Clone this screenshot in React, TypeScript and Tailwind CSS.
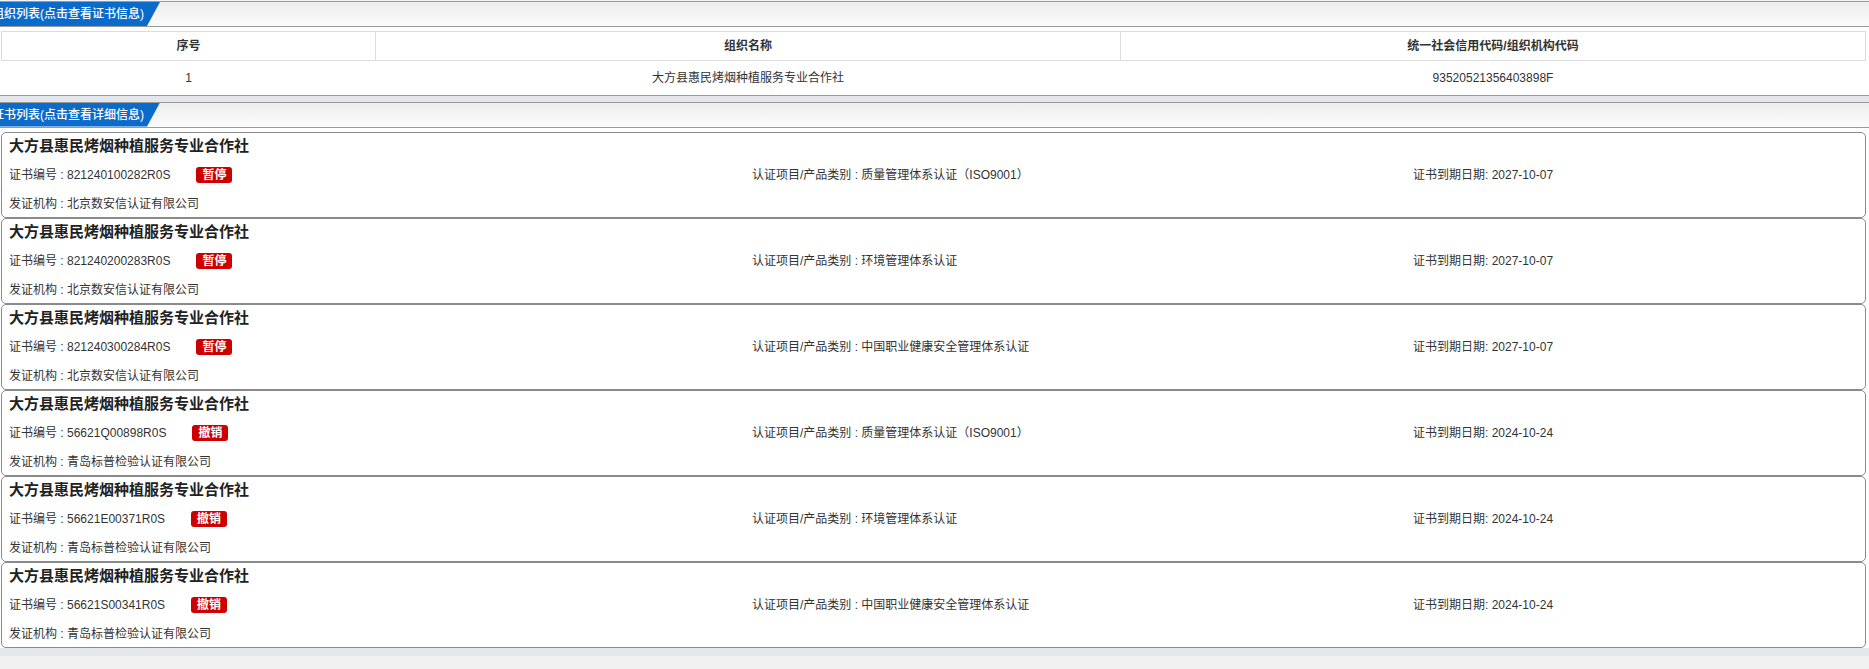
const FONT = "font-['Liberation_Sans','Noto_Sans_CJK_SC',sans-serif]";

type Cert = {
  no: string;
  status: "暂停" | "撤销";
  item: string;
  expire: string;
  issuer: string;
};

const orgName = "大方县惠民烤烟种植服务专业合作社";

const certs: Cert[] = [
  { no: "821240100282R0S", status: "暂停", item: "质量管理体系认证（ISO9001）", expire: "2027-10-07", issuer: "北京数安信认证有限公司" },
  { no: "821240200283R0S", status: "暂停", item: "环境管理体系认证", expire: "2027-10-07", issuer: "北京数安信认证有限公司" },
  { no: "821240300284R0S", status: "暂停", item: "中国职业健康安全管理体系认证", expire: "2027-10-07", issuer: "北京数安信认证有限公司" },
  { no: "56621Q00898R0S", status: "撤销", item: "质量管理体系认证（ISO9001）", expire: "2024-10-24", issuer: "青岛标普检验认证有限公司" },
  { no: "56621E00371R0S", status: "撤销", item: "环境管理体系认证", expire: "2024-10-24", issuer: "青岛标普检验认证有限公司" },
  { no: "56621S00341R0S", status: "撤销", item: "中国职业健康安全管理体系认证", expire: "2024-10-24", issuer: "青岛标普检验认证有限公司" },
];

function SectionHeader({ title }: { title: string }) {
  return (
    <div className="h-[26px] border-y border-[#9a9a9a] bg-gradient-to-b from-[#eeeeee] to-[#fbfbfb]">
      <div className="h-[24px] w-[160px] bg-[#0b6bcb] [clip-path:polygon(0_0,160px_0,147px_100%,0_100%)]">
        <span className="-ml-[8px] block text-[12px] leading-[24px] font-medium whitespace-nowrap text-white">{title}</span>
      </div>
    </div>
  );
}

function CertCard({ c }: { c: Cert }) {
  return (
    <div className="mr-[3px] ml-[1px] rounded-[5px] border border-[#8a8a8a] bg-white pl-[7px]">
      <div className="h-[26px] text-[15px] font-bold leading-[26px] text-[#222]">{orgName}</div>
      <div className="grid h-[32px] grid-cols-[743px_661px_1fr] items-center text-[12px] text-[#333]">
        <div className="flex items-center">
          <span>证书编号 : {c.no}</span>
          <span className="ml-[26px] inline-block h-[16px] rounded-[3px] bg-[#cc0000] px-[6px] text-[12px] font-bold leading-[16px] text-white">
            {c.status}
          </span>
        </div>
        <div>认证项目/产品类别 : {c.item}</div>
        <div>证书到期日期: {c.expire}</div>
      </div>
      <div className="h-[26px] text-[12px] leading-[26px] text-[#333]">发证机构 : {c.issuer}</div>
    </div>
  );
}

export default function App() {
  return (
    <div className={`${FONT} min-h-[669px] w-[1869px] overflow-hidden bg-[#f1f1f1]`}>
      <div className="h-[1px] bg-[#f4f4f4]" />
      <div className="bg-white">
        <SectionHeader title="组织列表(点击查看证书信息)" />
        <div className="pt-[4px] pr-[3px] pl-[1px]">
          <table className="w-full border-collapse text-[12px] text-[#333]">
            <thead>
              <tr className="h-[29px]">
                <th className="w-[374px] border border-[#dcdcdc] font-bold">序号</th>
                <th className="w-[745px] border border-[#dcdcdc] font-bold">组织名称</th>
                <th className="border border-[#dcdcdc] font-bold">统一社会信用代码/组织机构代码</th>
              </tr>
            </thead>
            <tbody>
              <tr className="h-[34px] text-center">
                <td>1</td>
                <td>{orgName}</td>
                <td>93520521356403898F</td>
              </tr>
            </tbody>
          </table>
        </div>
        <div className="border-b border-[#9a9a9a]" />
      </div>
      <div className="h-[6px] bg-[#e3e6ea]" />
      <div className="bg-white">
        <SectionHeader title="证书列表(点击查看详细信息)" />
        <div className="pt-[4px]">
          {certs.map((c) => (
            <CertCard key={c.no} c={c} />
          ))}
        </div>
      </div>
      <div className="h-[8px] bg-[#e3e6ea]" />
    </div>
  );
}
